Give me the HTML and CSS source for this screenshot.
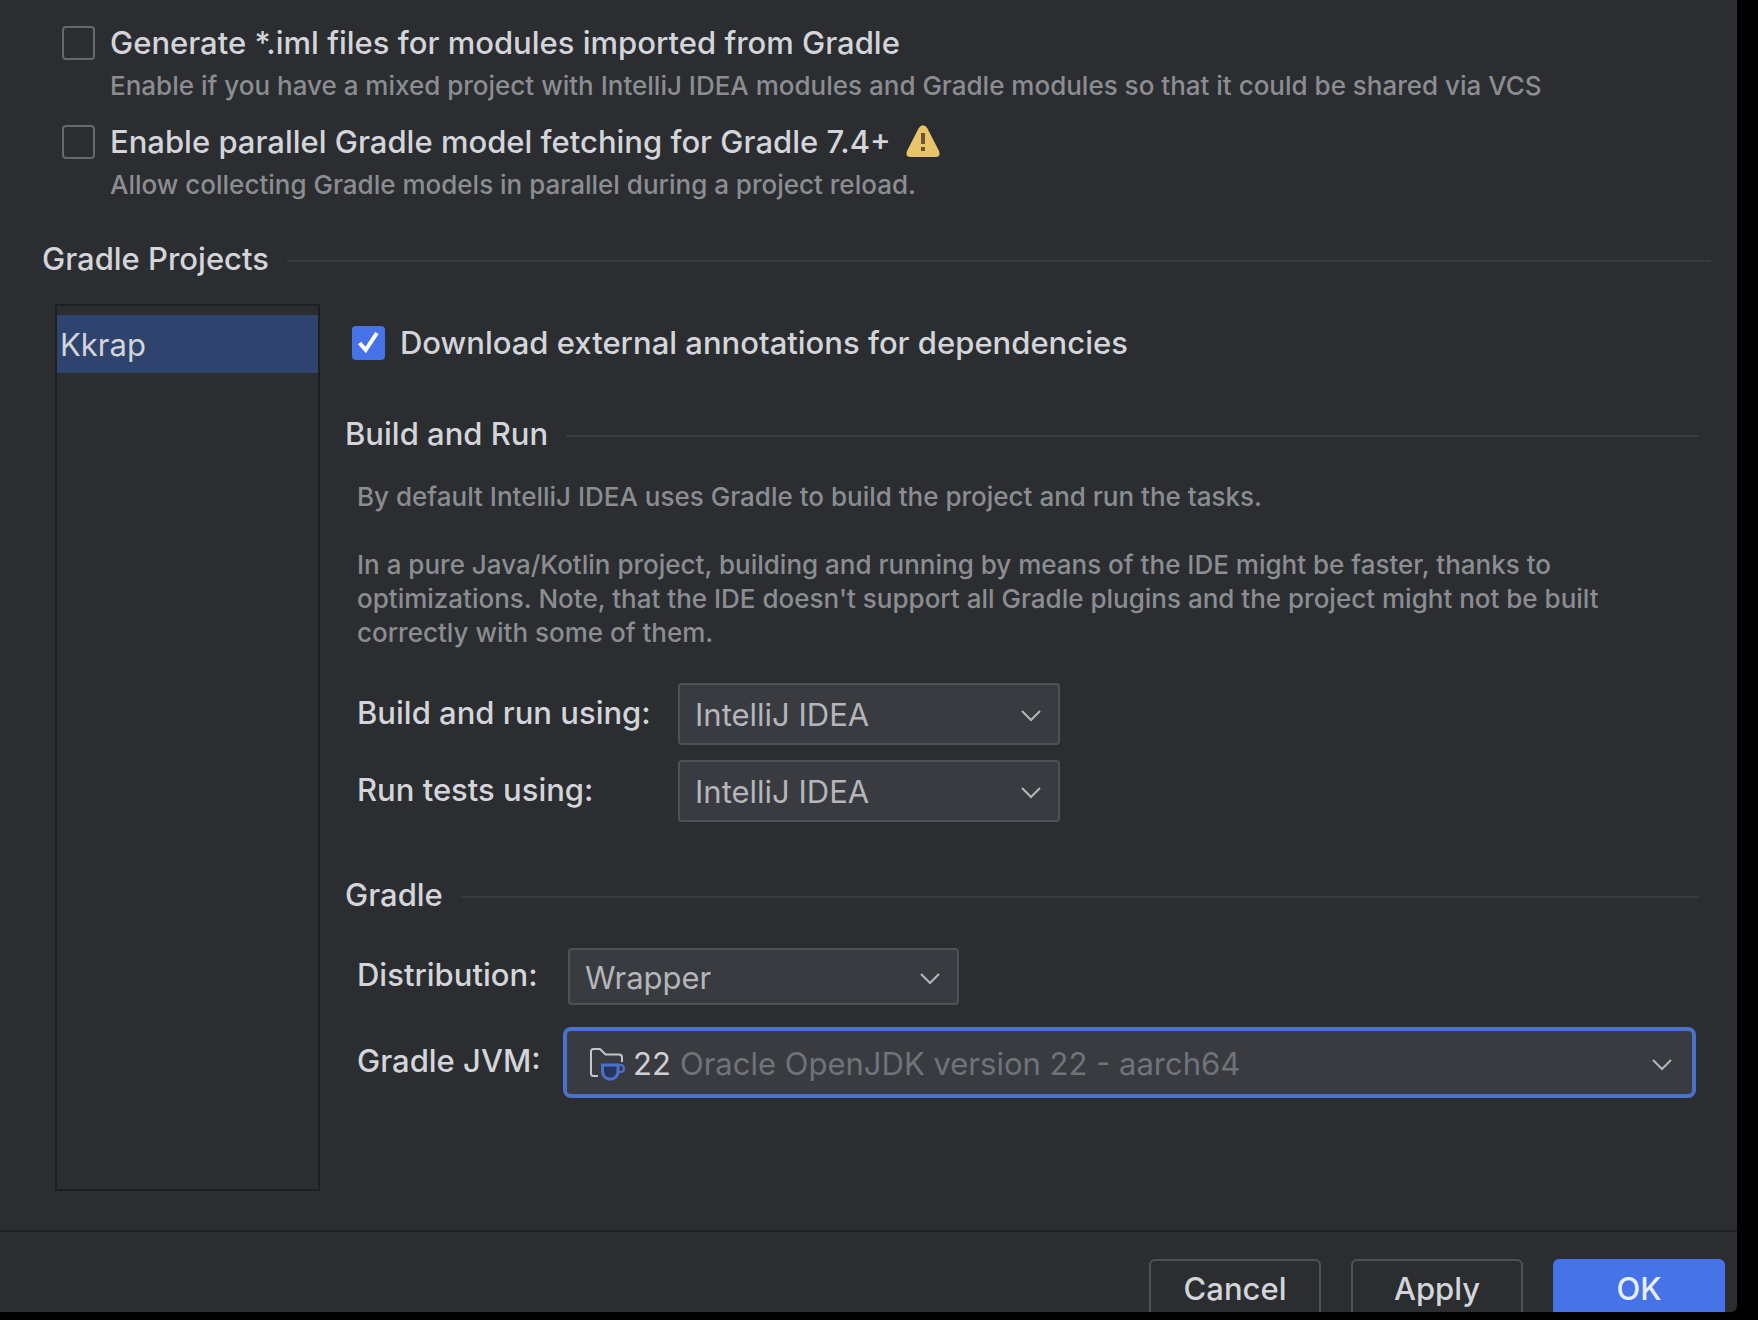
FILE: index.html
```html
<!DOCTYPE html>
<html lang="en">
<head>
    <meta charset="UTF-8">
    <meta name="viewport" content="width=device-width, initial-scale=1.0">
    <title>Gradle - Settings</title>
    <link rel="stylesheet" href="styles.css">
</head>
<body>
    <form class="dialog">
        <main class="settings">
            <div class="option">
                <input type="checkbox" id="generate-iml" class="checkbox">
                <label for="generate-iml">Generate *.iml files for modules imported from Gradle</label>
            </div>
            <p class="option-hint">Enable if you have a mixed project with IntelliJ IDEA modules and Gradle modules so that it could be shared via VCS</p>

            <div class="option">
                <input type="checkbox" id="parallel-fetch" class="checkbox">
                <label for="parallel-fetch">Enable parallel Gradle model fetching for Gradle 7.4+</label>
                <svg class="warning-icon" viewBox="0 0 34 34" aria-hidden="true">
                    <path d="M12.500 3.500Q17-3 21.500 3.500L33 26Q35 32 29.500 32H4.500Q-1 32 1 26Z" fill="#e9c46b"/>
                    <path d="M15 8h4v11h-4zM15 22h4v4h-4z" fill="#6b5532"/>
                </svg>
            </div>
            <p class="option-hint">Allow collecting Gradle models in parallel during a project reload.</p>

            <h2 class="section-title">Gradle Projects</h2>

            <div class="projects">
                <ul class="project-list">
                    <li class="selected">Kkrap</li>
                </ul>

                <div class="project-settings">
                    <div class="option annotations">
                        <input type="checkbox" id="annotations" class="checkbox" checked>
                        <label for="annotations">Download external annotations for dependencies</label>
                    </div>

                    <h3 class="section-title">Build and Run</h3>
                    <div class="description">
                        <p>By default IntelliJ IDEA uses Gradle to build the project and run the tasks.</p>
                        <p>In a pure Java/Kotlin project, building and running by means of the IDE might be faster, thanks to optimizations. Note, that the IDE doesn't support all Gradle plugins and the project might not be built correctly with some of them.</p>
                    </div>

                    <div class="fields run-fields">
                        <label for="build-using">Build and run using:</label>
                        <div class="select-box">
                            <select id="build-using">
                                <option>IntelliJ IDEA</option>
                                <option>Gradle</option>
                            </select>
                            <svg class="chevron" viewBox="0 0 20 12" aria-hidden="true"><path d="M1 1l9 9 9-9"/></svg>
                        </div>
                        <label for="tests-using">Run tests using:</label>
                        <div class="select-box">
                            <select id="tests-using">
                                <option>IntelliJ IDEA</option>
                                <option>Gradle</option>
                            </select>
                            <svg class="chevron" viewBox="0 0 20 12" aria-hidden="true"><path d="M1 1l9 9 9-9"/></svg>
                        </div>
                    </div>

                    <h3 class="section-title">Gradle</h3>
                    <div class="fields gradle-fields">
                        <label for="distribution">Distribution:</label>
                        <div class="select-box distribution">
                            <select id="distribution">
                                <option>Wrapper</option>
                            </select>
                            <svg class="chevron" viewBox="0 0 20 12" aria-hidden="true"><path d="M1 1l9 9 9-9"/></svg>
                        </div>
                        <label for="gradle-jvm">Gradle JVM:</label>
                        <div class="select-box jvm">
                            <select id="gradle-jvm">
                                <option>22</option>
                            </select>
                            <span class="jvm-version">Oracle OpenJDK version 22 - aarch64</span>
                            <svg class="jdk-icon" viewBox="0 0 38 38" aria-hidden="true">
                                <path d="M10 31H5.500Q3 31 3 28.500V6.500Q3 4 5.500 4H12L17.500 9.500H31Q34 9.500 34 12.500V17" fill="none" stroke="#c4c6cb" stroke-width="2"/>
                                <path d="M14.500 20H30V26.500A7.750 7.750 0 0 1 14.500 26.500Z" fill="#25365f" stroke="#4a72cc" stroke-width="3"/>
                                <path d="M30 20H33Q36 20 36 23.500T33 27H30" fill="none" stroke="#4a72cc" stroke-width="2"/>
                            </svg>
                            <svg class="chevron" viewBox="0 0 20 12" aria-hidden="true"><path d="M1 1l9 9 9-9"/></svg>
                        </div>
                    </div>
                </div>
            </div>
        </main>

        <footer class="actions">
            <button type="button" class="btn">Cancel</button>
            <button type="button" class="btn">Apply</button>
            <button type="submit" class="btn btn-primary">OK</button>
        </footer>
    </form>
</body>
</html>
```
FILE: styles.css
```css
* {
    box-sizing: border-box;
}
body {
    margin: 0;
    height: 100vh;
    padding: 0 21px 8px 0;
    background-color: #000;
    color: #d3d5da;
    font-family: Inter, sans-serif;
    font-size: 31px;
    font-weight: 500;
    line-height: 36px;
    overflow: hidden;
}
h2, h3, p, ul {
    margin: 0;
    padding: 0;
    font-size: inherit;
    font-weight: inherit;
}
.dialog {
    height: 100%;
    display: flex;
    flex-direction: column;
    background-color: #2b2d30;
    border-radius: 0 0 6px 0;
    overflow: hidden;
}
.settings {
    flex: 1;
    display: flex;
    flex-direction: column;
    padding: 25px 26px 39px 42px;
}
.option {
    display: flex;
    align-items: center;
    gap: 15px;
    padding-left: 20px;
}
.checkbox {
    appearance: none;
    flex: none;
    width: 33px;
    height: 34px;
    margin: 0;
    border: 2px solid #66686d;
    border-radius: 4px;
}
.checkbox:checked {
    border-color: #4673e8;
    background: #4673e8 url("data:image/svg+xml,%3Csvg xmlns='http://www.w3.org/2000/svg' viewBox='0 0 30 30'%3E%3Cpath d='M6 15l6 7L23 5' fill='none' stroke='white' stroke-width='4'/%3E%3C/svg%3E") center / 30px 30px no-repeat;
}
.option-hint {
    padding: 7px 0 20px 68px;
    color: #8b8d92;
    font-size: 26px;
}
.warning-icon {
    width: 34px;
    height: 34px;
}
.section-title {
    display: flex;
    align-items: center;
    gap: 18px;
}
.section-title::after {
    content: "";
    flex: 1;
    height: 2px;
    margin-top: 4px;
    background-color: #393b40;
}
h2.section-title {
    margin-top: 18px;
}
.projects {
    flex: 1;
    display: flex;
    gap: 25px;
    margin: 27px 12px 0 13px;
}
.project-list {
    width: 265px;
    padding-top: 9px;
    border: 2px solid #1e1f22;
    list-style: none;
}
.selected {
    padding: 12px 3px 10px;
    background-color: #2e436e;
    font-weight: 400;
}
.project-settings {
    flex: 1;
}
.annotations {
    margin: 21px 0 55px;
    padding-left: 7px;
}
.description {
    margin: 28px 0 33px;
    padding: 0 70px 0 12px;
    color: #8b8d92;
    font-size: 26px;
    line-height: 34px;
}
.description p + p {
    margin-top: 34px;
}
.fields {
    display: grid;
    align-items: center;
    justify-content: start;
    padding-left: 12px;
}
.fields label {
    padding-bottom: 3px;
}
.run-fields {
    grid-template-columns: 321px 382px;
    row-gap: 15px;
    margin-bottom: 55px;
}
.gradle-fields {
    grid-template-columns: 206px 1fr;
    justify-content: stretch;
    row-gap: 22px;
    margin-top: 35px;
}
.select-box {
    position: relative;
}
select {
    appearance: none;
    display: block;
    width: 100%;
    height: 62px;
    padding: 2px 15px 0;
    border: 2px solid #4e5157;
    border-radius: 4px;
    background-color: #393b40;
    color: #b4b6bb;
    font: inherit;
    font-weight: 400;
}
.chevron {
    position: absolute;
    right: 19px;
    top: 50%;
    width: 20px;
    height: 12px;
    margin-top: -4px;
    fill: none;
    stroke: #b4b6bb;
    stroke-width: 2;
    pointer-events: none;
}
.distribution {
    width: 391px;
    margin-left: 5px;
}
.distribution select {
    height: 57px;
}
.jvm {
    margin-right: 3px;
}
.jvm select {
    height: 71px;
    padding-left: 66px;
    border: 4px solid #4a72cc;
    border-radius: 8px;
    color: #ced0d6;
}
.jvm .chevron {
    right: 24px;
}
.jvm-version {
    position: absolute;
    left: 117px;
    top: 19px;
    color: #6f737a;
    font-weight: 400;
    pointer-events: none;
}
.jdk-icon {
    position: absolute;
    left: 25px;
    top: 18px;
    width: 38px;
    height: 38px;
    pointer-events: none;
}
.actions {
    display: flex;
    justify-content: flex-end;
    gap: 30px;
    height: 82px;
    padding: 27px 12px 0;
    border-top: 2px solid #1e1f22;
}
.btn {
    flex: none;
    width: 172px;
    height: 62px;
    padding: 0 0 2px;
    border: 2px solid #4e5157;
    border-radius: 6px;
    background-color: transparent;
    color: inherit;
    font: inherit;
}
.btn-primary {
    border-color: #4673e8;
    background-color: #4673e8;
    color: #e8efff;
}
```
